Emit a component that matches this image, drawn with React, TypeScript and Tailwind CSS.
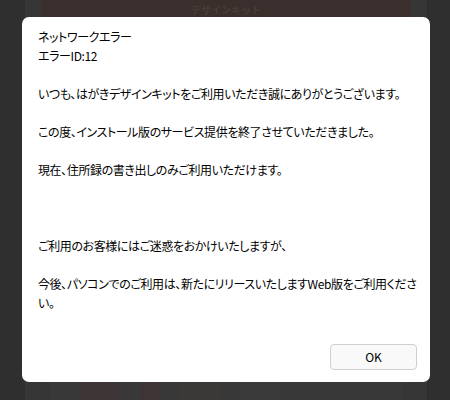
import React from "react";

export default function App() {
  const font = { fontFamily: '"Noto Sans CJK JP", "Noto Sans", sans-serif' };
  return (
    <div className="relative w-[450px] h-[400px] overflow-hidden bg-[#2f2f2f]">
      {/* dimmed underlying app */}
      <div className="ml-[25px] mr-[23px] h-full bg-[#363636] flex flex-col">
        <div className="mx-[16px] h-[30px] bg-[#3a2f2c] flex flex-col items-center justify-end pb-[15px]">
          <span className="text-[10px] leading-none text-[#4a3b37] font-bold" style={font}>デザインキット</span>
        </div>
        <div className="flex-1" />
        <div className="mx-[25px] h-[18px] bg-[#383838] flex gap-[20px] px-[30px]">
          <div className="w-[40px] h-full bg-[#3d3535]" />
          <div className="w-[20px] h-full bg-[#3e3435]" />
          <div className="w-[40px] h-full bg-[#3b3938]" />
          <div className="w-[40px] h-full bg-[#3a3a3a]" />
        </div>
      </div>

      {/* modal */}
      <div className="absolute left-[22px] top-[17px] w-[408px] h-[365px] bg-white rounded-[7px] flex flex-col">
        <div
          className="pl-[16px] pr-[12px] pt-[10px] text-[12px] leading-[19px] tracking-[-0.4px] text-black"
          style={{ ...font, fontFeatureSettings: '"palt"' }}
        >
          <div>ネットワークエラー</div>
          <div>エラーID:12</div>
          <div className="h-[19px]" />
          <div>いつも、はがきデザインキットをご利用いただき誠にありがとうございます。</div>
          <div className="h-[19px]" />
          <div>この度、インストール版のサービス提供を終了させていただきました。</div>
          <div className="h-[19px]" />
          <div>現在、住所録の書き出しのみご利用いただけます。</div>
          <div className="h-[57px]" />
          <div>ご利用のお客様にはご迷惑をおかけいたしますが、</div>
          <div className="h-[19px]" />
          <div className="whitespace-nowrap">今後、パソコンでのご利用は、新たにリリースいたしますWeb版をご利用くださ</div>
          <div>い。</div>
        </div>
        <div className="flex-1" />
        <div className="flex justify-end pr-[13px] pb-[12px]">
          <button
            className="w-[87px] h-[26px] rounded-[4px] border border-[#cfcfcf] bg-[#f9f9f9] text-[12px] text-black flex items-center justify-center"
            style={font}
          >
            OK
          </button>
        </div>
      </div>
    </div>
  );
}
